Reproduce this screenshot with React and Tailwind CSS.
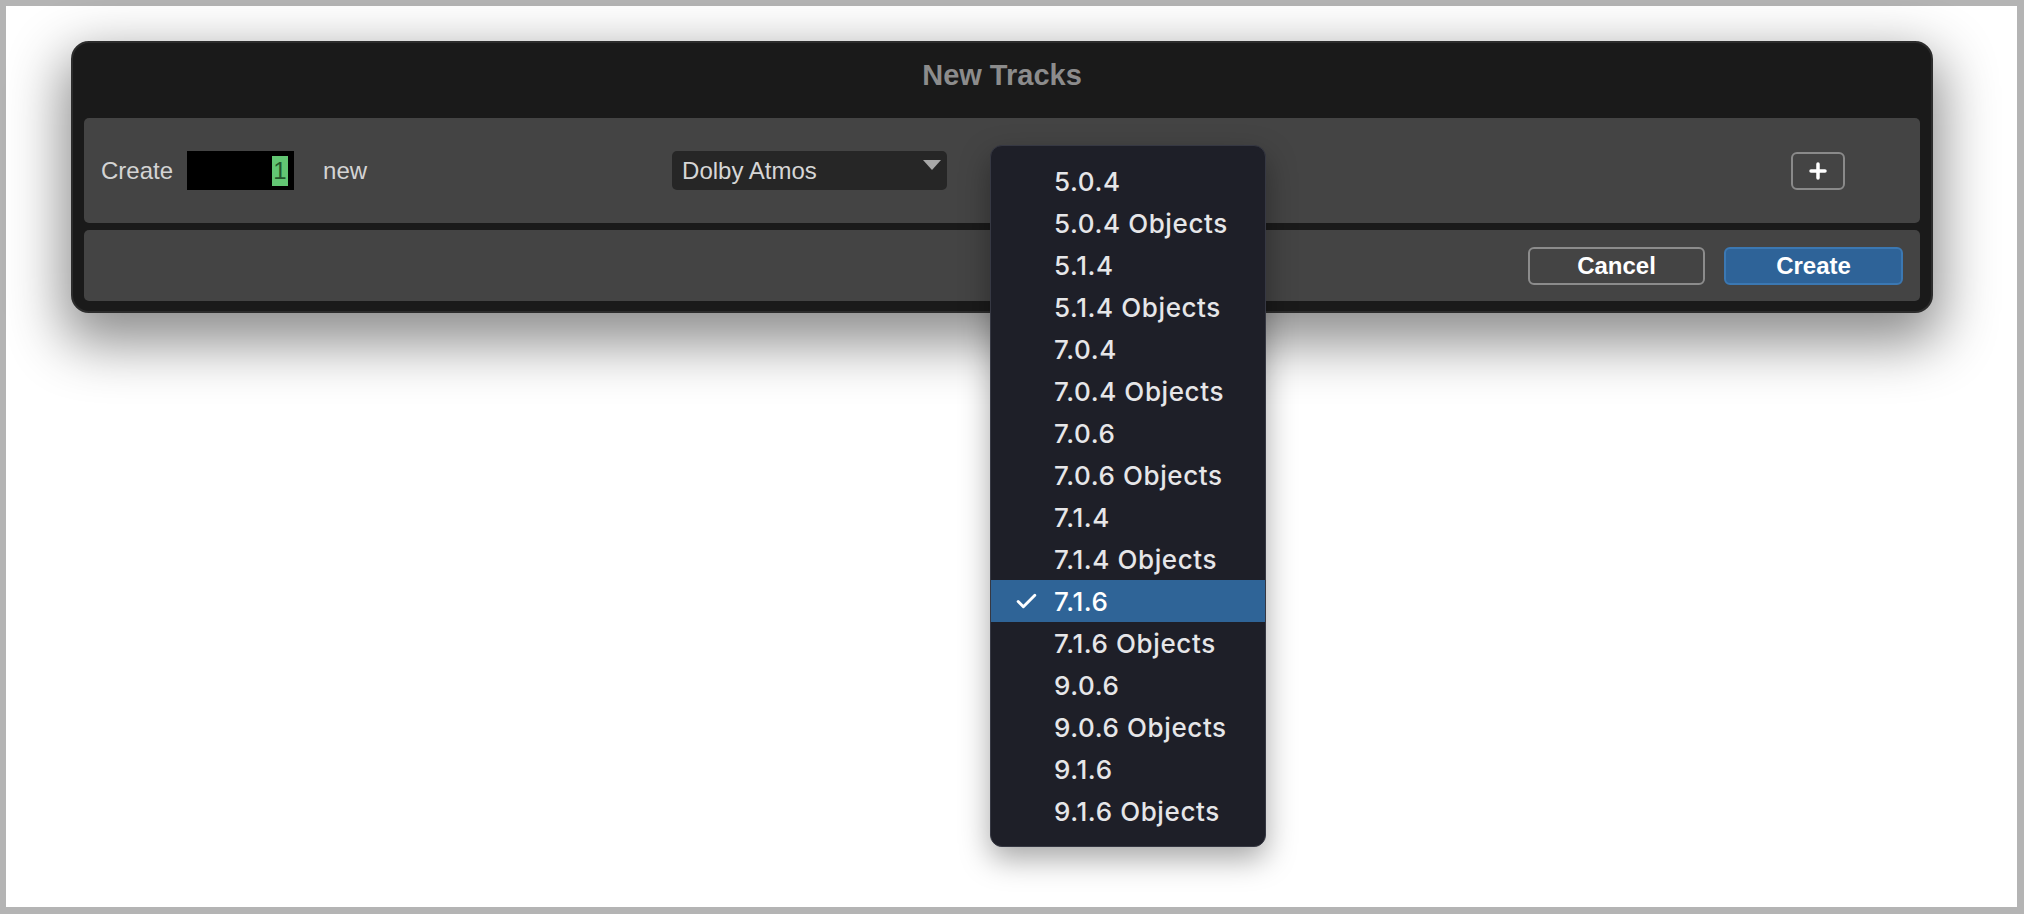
import { Check, Plus } from 'lucide-react';

const formats = [
    '5.0.4',
    '5.0.4 Objects',
    '5.1.4',
    '5.1.4 Objects',
    '7.0.4',
    '7.0.4 Objects',
    '7.0.6',
    '7.0.6 Objects',
    '7.1.4',
    '7.1.4 Objects',
    '7.1.6',
    '7.1.6 Objects',
    '9.0.6',
    '9.0.6 Objects',
    '9.1.6',
    '9.1.6 Objects',
];

const selected = '7.1.6';

function FormatMenu() {
    return (
        <div className="absolute left-[990px] top-[145px] w-[276px] rounded-[12px] border border-[#363843] bg-[#1e1f28] py-[14px] shadow-[0_12px_30px_rgba(0,0,0,0.35)] font-['Inter',sans-serif]">
            {formats.map((f) => {
                const active = f === selected;
                return (
                    <div
                        key={f}
                        className={`relative flex h-[42px] items-center pl-[63px] text-[26px] font-medium tracking-[0.6px] ${active ? 'bg-[#2f6497] text-white' : 'text-[#e6e6e8]'}`}
                    >
                        {active && (
                            <Check className="absolute left-[23px] top-[9px] h-[25px] w-[25px] text-white" strokeWidth={2.8} />
                        )}
                        {f}
                    </div>
                );
            })}
        </div>
    );
}

export default function App() {
    return (
        <div className="relative h-[914px] w-[2024px] bg-[#b4b4b4] pt-[6px] pl-[6px] pr-[7px] pb-[7px] font-['Liberation_Sans',Arial,sans-serif]">
            <div className="h-full w-full bg-white pt-[35px] pl-[65px]">
                {/* Dialog */}
                <div className="flex h-[272px] w-[1862px] flex-col rounded-[18px] border-2 border-[#2c2c2c] bg-[#1a1a1a] px-[11px] pb-[10px] shadow-[0_22px_55px_8px_rgba(0,0,0,0.45)]">
                    <div className="flex h-[75px] shrink-0 items-center justify-center pb-[10px] text-[29px] font-bold text-[#8c8c8c]">
                        New Tracks
                    </div>

                    {/* Track settings row */}
                    <div className="flex h-[105px] shrink-0 items-center rounded-[5px] bg-[#444444] pl-[17px] pr-[75px] text-[24px] text-[#d4d4d4]">
                        <span>Create</span>
                        <div className="ml-[14px] flex h-[39px] w-[107px] items-center justify-end bg-black pr-[6px]">
                            <span className="flex h-[30px] w-[16px] items-center justify-center bg-[#62c673] text-[24px] leading-none text-[#24552c]">1</span>
                        </div>
                        <span className="ml-[29px]">new</span>

                        <div className="relative ml-[305px] flex h-[39px] w-[275px] items-center rounded-[5px] bg-[#262626] pl-[10px] text-[#d6d6d6]">
                            Dolby Atmos
                            <svg className="absolute right-[6px] top-[9px]" width="18" height="10" viewBox="0 0 18 10">
                                <polygon points="0,0 18,0 9,10" fill="#a8a8a8" />
                            </svg>
                        </div>

                        <button className="ml-auto flex h-[38px] w-[54px] items-center justify-center rounded-[6px] border-2 border-[#8a8a8a] text-white">
                            <Plus className="h-[24px] w-[24px]" strokeWidth={3.5} />
                        </button>
                    </div>

                    {/* Footer */}
                    <div className="mt-[7px] flex flex-1 items-center justify-end gap-[19px] rounded-[5px] bg-[#444444] pr-[17px]">
                        <button className="flex h-[38px] w-[177px] items-center justify-center rounded-[6px] border-2 border-[#8c8c8c] text-[24px] font-bold text-white">
                            Cancel
                        </button>
                        <button className="flex h-[38px] w-[179px] items-center justify-center rounded-[6px] border-2 border-[#3b78b3] bg-[#2e6398] text-[24px] font-bold text-white">
                            Create
                        </button>
                    </div>
                </div>
            </div>

            <FormatMenu />
        </div>
    );
}
